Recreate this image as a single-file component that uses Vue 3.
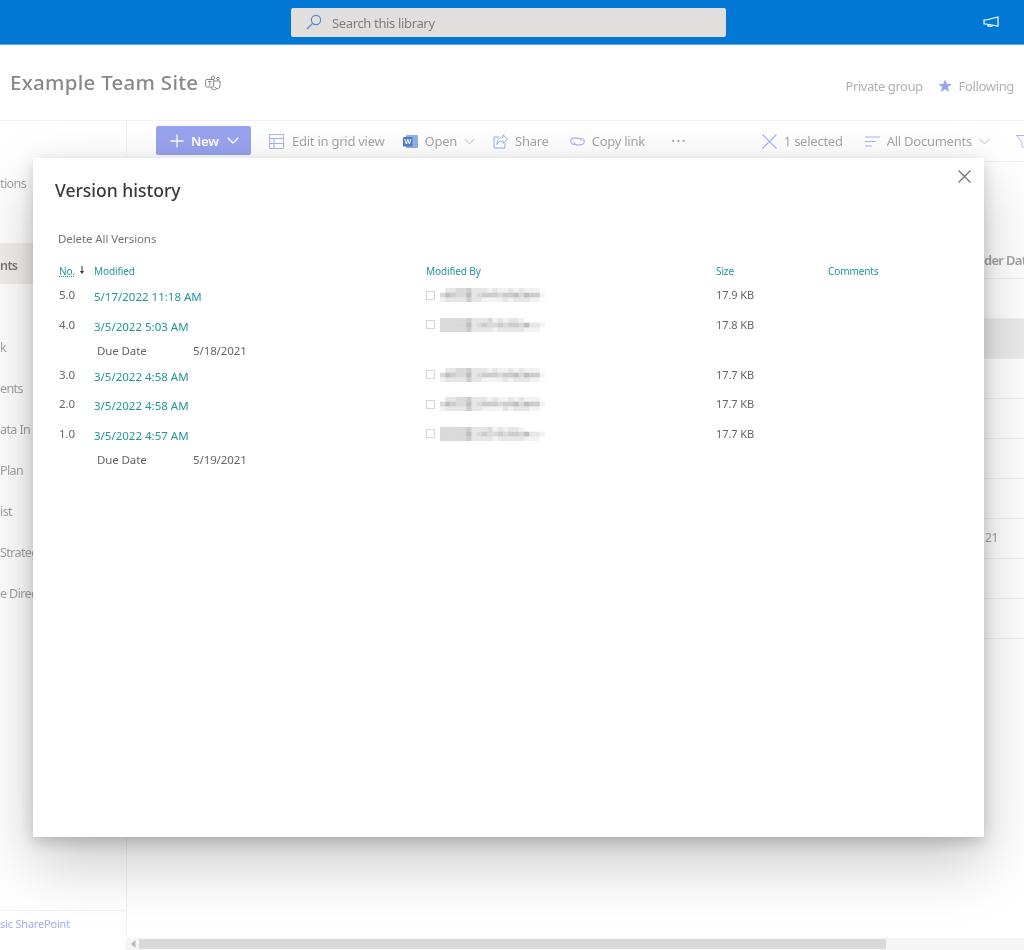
<script setup>
const nav = [
  { t: 'tions' }, { t: '' }, { t: 'nts', on: true }, { t: '' }, { t: 'k' }, { t: 'ents' },
  { t: 'ata In' }, { t: 'Plan' }, { t: 'ist' }, { t: 'Strateg' }, { t: 'e Direc' }
]
const listRows = [
  { c: '' }, { c: '', sel: true }, { c: '' }, { c: '' }, { c: '' }, { c: '' }, { c: '21' }, { c: '' }, { c: '' }
]
const A = ['02233422212112121110', '35433523444344535441', '12222422111121222110']
const B = ['33333422231212210000', '33333523433434435221', '33333422221222221110']
const versions = [
  { no: '5.0', when: '5/17/2022 11:18 AM', size: '17.9 KB', p: A },
  { no: '4.0', when: '3/5/2022 5:03 AM', size: '17.8 KB', p: B, due: '5/18/2021' },
  { no: '3.0', when: '3/5/2022 4:58 AM', size: '17.7 KB', p: A },
  { no: '2.0', when: '3/5/2022 4:58 AM', size: '17.7 KB', p: A },
  { no: '1.0', when: '3/5/2022 4:57 AM', size: '17.7 KB', p: B, due: '5/19/2021' }
]
const cells = (p) => p.flatMap((row, y) => [...row].map((d, x) => ({ x: x * 5.25, y: y * 4.7, o: Number(d) * 0.075, k: x + '-' + y })))
</script>

<template>
  <div class="page">
    <header class="suite">
      <div class="search">
        <svg class="ic16" viewBox="0 0 16 16" fill="none" stroke="#4a86d0" stroke-width="1.1"><circle cx="10" cy="6" r="4.6"/><path d="M6.6 9.4 1 15"/></svg>
        <span class="search-text">Search this library</span>
      </div>
      <svg class="mega" viewBox="0 0 16 12" fill="none" stroke="#fff" stroke-width="1.2"><path d="M1 4h2l12-3v9L3 8H1z"/><path d="M5 8.5v1.6h4V9.4"/></svg>
    </header>

    <section class="site">
      <h1>Example Team Site</h1>
      <svg class="teams" viewBox="0 0 16 16" fill="none" stroke="#8a8886" stroke-width="1"><rect x=".7" y="4.5" width="8" height="7.5" rx=".5"/><path d="M3 6.5h3.6M4.8 6.5V10.5"/><circle cx="8" cy="2.8" r="1.7"/><circle cx="13" cy="3.6" r="1.3"/><path d="M9 6h6v5a2.6 2.6 0 0 1-5 1M6 12.5a3.5 3.5 0 0 0 6 1"/></svg>
      <span class="site-right">Private group</span>
      <svg class="star" viewBox="0 0 14 14"><path fill="#98a3ef" d="M7 .6 8.900 5h4.700L9.800 8l1.400 5L7 10.200 2.800 13l1.400-5L.4 5h4.700z"/></svg>
      <span class="follow">Following</span>
    </section>

    <div class="body">
      <nav class="nav">
        <div class="nav-list">
          <div v-for="(n, i) in nav" :key="i" class="nav-item" :class="{ on: n.on }">{{ n.t }}</div>
        </div>
        <div class="nav-foot">sic SharePoint</div>
      </nav>

      <main class="main">
        <div class="cmd">
          <button class="new">
            <svg class="plus" viewBox="0 0 14 14" stroke="#fff" stroke-width="1.3"><path d="M7 .5v13M.5 7h13"/></svg>
            <span>New</span>
            <svg class="chev" viewBox="0 0 12 7" fill="none" stroke="#fff" stroke-width="1.3"><path d="m.7.7 5.3 5.3L11.300.7"/></svg>
          </button>
          <div class="cmd-item m18 wide">
            <svg class="ic15" viewBox="0 0 15 15" fill="none" stroke="#aab2f2"><path d="M.5.5h14v14H.5zM.5 4.500h14M.5 9.500h14M5 4.500v10"/></svg>
            <span>Edit in grid view</span>
          </div>
          <div class="cmd-item m18">
            <svg class="ic15" viewBox="0 0 15 15"><rect x="3" y="1" width="12" height="13" rx="1" fill="#8fb1e6"/><rect x="0" y="3" width="9.500" height="9.500" rx="1" fill="#4f7fc8"/><text x="1.500" y="10.300" font-size="7" font-weight="700" fill="#fff" font-family="Noto Sans, sans-serif">W</text></svg>
            <span>Open</span>
            <svg class="chev-g" viewBox="0 0 12 7" fill="none" stroke="#b5b3b1"><path d="m.7.7 5.300 5.300L11.300.7"/></svg>
          </div>
          <div class="cmd-item m18">
            <svg class="ic15" viewBox="0 0 15 15" fill="none" stroke="#8eb0ea"><path d="M6 3H1v11h11V9"/><path d="M14.500 5 10 .8v2.400C6 3.200 4 6 4 10.500 5.500 7.500 7.500 7 10 7v2.300z"/></svg>
            <span>Share</span>
          </div>
          <div class="cmd-item m21">
            <svg class="ic15" viewBox="0 0 15 15" fill="none" stroke="#aab2f2" stroke-width="1.100"><path d="M5.500 10.500H4a3.200 3.200 0 0 1 0-6.400h4a3 3 0 0 1 3 2.600"/><path d="M9.500 4.500H11a3.200 3.200 0 0 1 0 6.400H7a3 3 0 0 1-3-2.600"/></svg>
            <span>Copy link</span>
          </div>
          <div class="dots">···</div>
          <div class="cmd-item m75">
            <svg class="ic15" viewBox="0 0 15 15" stroke="#aab2f2" stroke-width="1.100"><path d="m.5.500 14 14M14.500.500l-14 14"/></svg>
            <span>1 selected</span>
          </div>
          <div class="cmd-item m22">
            <svg class="ic15" viewBox="0 0 15 15" stroke="#aab2f2" stroke-width="1.100"><path d="M0 3h15M0 7.500h11M0 12h7"/></svg>
            <span>All Documents</span>
            <svg class="chev-g" viewBox="0 0 12 7" fill="none" stroke="#b5b3b1"><path d="m.7.7 5.300 5.300L11.300.7"/></svg>
          </div>
          <svg class="filter" viewBox="0 0 15 15" fill="none" stroke="#aab2f2"><path d="M.5 1.500h14L9 8v6L6 12.500V8z"/></svg>
        </div>

        <div class="list">
          <div class="list-head"><span>der Dat</span></div>
          <div v-for="(r, i) in listRows" :key="i" class="list-row" :class="{ sel: r.sel }"><span>{{ r.c }}</span></div>
        </div>
        <div class="spacer"></div>
        <div class="hscroll">
          <svg class="arrow" viewBox="0 0 5 8"><path fill="#b9b9b9" d="M4.500 0v8L0 4z"/></svg>
          <div class="thumb"></div>
        </div>
      </main>
    </div>

    <div class="modal">
      <button class="close" aria-label="Close">
        <svg viewBox="0 0 12 12" stroke="#737373" stroke-width="1.100"><path d="m.5.500 11 11M11.500.500l-11 11"/></svg>
      </button>
      <h2>Version history</h2>
      <div class="del">Delete All Versions</div>
      <div class="grid head">
        <div class="sort"><span class="sort-no">No.</span><svg viewBox="0 0 6 8" stroke="#333" fill="#333"><path d="M3 0v6" fill="none"/><path d="M1 5h4L3 8z" stroke="none"/></svg></div>
        <div>Modified</div>
        <div>Modified By</div>
        <div>Size</div>
        <div>Comments</div>
      </div>
      <template v-for="v in versions" :key="v.no + v.when">
        <div class="grid row">
          <div class="no">{{ v.no }}</div>
          <div class="when">{{ v.when }}</div>
          <div class="who">
            <span class="box"></span>
            <svg class="blur" viewBox="0 0 106 14" width="106" height="14"><rect v-for="c in cells(v.p)" :key="c.k" :x="c.x" :y="c.y" width="5.250" height="4.700" fill="#555" :fill-opacity="c.o"/></svg>
          </div>
          <div class="size">{{ v.size }}</div>
          <div></div>
        </div>
        <div v-if="v.due" class="due"><span>Due Date</span><span>{{ v.due }}</span></div>
      </template>
    </div>
  </div>
</template>

<style>
html, body { margin: 0; background: #fff; }
</style>

<style scoped>
.page { position: relative; width: 1024px; height: 950px; overflow: hidden; display: flex; flex-direction: column; font-family: "Noto Sans", "Open Sans", sans-serif; font-size: 13px; color: #a8a6a4; background: #fff; letter-spacing: -0.35px; filter: blur(.35px); }
.suite { height: 45px; flex: none; background: #0078d4; border-bottom: 1px solid #5aa9e6; box-sizing: border-box; display: flex; align-items: center; padding-left: 291px; }
.search { width: 435px; height: 29px; background: #e1dfdd; border-radius: 2px; display: flex; align-items: center; box-sizing: border-box; padding-left: 15px; gap: 10px; color: #7f7d7b; }
.search-text { padding-top: 2px; }
.ic16 { width: 16px; height: 16px; }
.mega { width: 16px; height: 12px; margin-left: 257px; }
.site { height: 75px; flex: none; display: flex; align-items: center; padding-left: 10px; box-sizing: border-box; }
.site h1 { margin: 0; font-size: 20.500px; font-weight: 500; color: #8a8886; letter-spacing: 0.27px; line-height: 1; margin-top: -1px; }
.teams { width: 16px; height: 16px; margin-left: 7px; }
.site-right { margin-left: auto; margin-top: 7px; color: #b3b1af; letter-spacing: -0.45px; }
.star { width: 14px; height: 14px; margin-left: 15px; margin-top: 7px; }
.follow { margin: 7px 10px 0 7px; color: #b3b1af; }
.body { flex: 1; display: flex; min-height: 0; border-top: 1px solid #f3f2f1; }
.nav { width: 126px; flex: none; border-right: 1px solid #f3f2f1; display: flex; flex-direction: column; }
.nav-list { padding-top: 40px; flex: 1; }
.nav-item { height: 41px; line-height: 46px; white-space: nowrap; color: #a6a4a2; font-size: 12.500px; letter-spacing: -0.6px; overflow: hidden; }
.nav-item.on { background: #f0efee; color: #7a7876; font-weight: 600; }
.nav-foot { height: 40px; box-sizing: border-box; border-top: 1px solid #f3f2f1; padding-top: 5px; color: #a4abf2; font-size: 11px; white-space: nowrap; letter-spacing: -0.2px; }
.main { flex: 1; display: flex; flex-direction: column; min-width: 0; }
.cmd { height: 41px; flex: none; box-sizing: border-box; border-bottom: 1px solid #f0f0f0; display: flex; align-items: center; padding-left: 29px; white-space: nowrap; letter-spacing: -0.25px; }
.cmd > * { flex: none; }
.new { width: 95px; height: 29px; margin-top: -1px; border: 0; border-radius: 2px; background: #98a3ef; color: #fff; font: inherit; font-weight: 600; display: flex; align-items: center; padding: 0 0 0 14px; box-sizing: border-box; letter-spacing: inherit; }
.plus { width: 14px; height: 14px; margin-right: 7px; }
.chev { width: 12px; height: 7px; margin-left: 8px; }
.cmd-item { display: flex; align-items: center; gap: 7px; }
.cmd-item.wide { gap: 8px; }
.ic15 { width: 15px; height: 15px; flex: none; }
.chev-g { width: 11px; height: 7px; flex: none; }
.m18 { margin-left: 18px; }
.m21 { margin-left: 21px; }
.m22 { margin-left: 22px; }
.m75 { margin-left: 75px; }
.dots { margin-left: 26px; font-size: 16px; letter-spacing: 1px; }
.filter { width: 15px; height: 15px; margin-left: 26px; }
.list { flex: none; }
.list-head { height: 117px; box-sizing: border-box; border-bottom: 1px solid #f3f2f1; padding: 89px 0 0 857px; font-weight: 600; color: #a6a4a2; white-space: nowrap; overflow: hidden; line-height: 18px; letter-spacing: -0.7px; }
.list-row { height: 40px; box-sizing: border-box; border-bottom: 1px solid #f3f2f1; padding-left: 858px; line-height: 38px; font-size: 12px; }
.list-row.sel { background: #ececec; }
.spacer { flex: 1; }
.hscroll { height: 12px; flex: none; background: #f5f5f5; display: flex; align-items: center; padding-left: 4px; }
.arrow { width: 5px; height: 8px; margin-right: 3px; }
.thumb { width: 747px; height: 10px; background: #d9d9d9; }
.modal { position: absolute; left: 33px; top: 158px; width: 951px; height: 679px; box-sizing: border-box; background: #fff; padding: 20px 0 0 25px; box-shadow: 0 26px 58px rgba(0, 0, 0, .22), 0 5px 14px rgba(0, 0, 0, .18); color: #666; font-size: 11.500px; letter-spacing: -0.1px; }
.close { position: absolute; right: 13px; top: 12px; width: 13px; height: 13px; border: 0; padding: 0; background: none; }
.close svg { display: block; width: 13px; height: 13px; }
.modal h2 { margin: 0 0 0 -3px; font-size: 17.500px; font-weight: 500; line-height: 24px; color: #3b3a39; letter-spacing: 0; }
.del { margin-top: 29px; line-height: 16px; color: #767472; }
.grid { display: grid; grid-template-columns: 35px 332px 290px 112px 1fr; white-space: nowrap; }
.head { margin-top: 16px; margin-bottom: 3px; height: 16px; line-height: 16px; font-size: 10px; color: #1f9799; padding-left: 1px; }
.sort { display: flex; align-items: flex-start; gap: 4px; }
.sort-no { text-decoration: underline dotted; }
.sort svg { width: 6px; height: 8px; margin-top: 3px; }
.row { height: 29.500px; align-items: center; padding-left: 1px; }
.no { margin-top: -4px; }
.when { color: #1f9799; letter-spacing: 0; }
.who { display: flex; align-items: center; gap: 5px; margin-top: -3px; }
.box { width: 9px; height: 9px; border: 1px solid #d6d6d6; box-sizing: border-box; flex: none; }
.blur { filter: blur(.7px); }
.size { margin-top: -4px; font-size: 11px; }
.due { height: 21.500px; margin-top: -1px; display: grid; grid-template-columns: 96px 1fr; padding-left: 39px; line-height: 22px; white-space: nowrap; }
</style>
